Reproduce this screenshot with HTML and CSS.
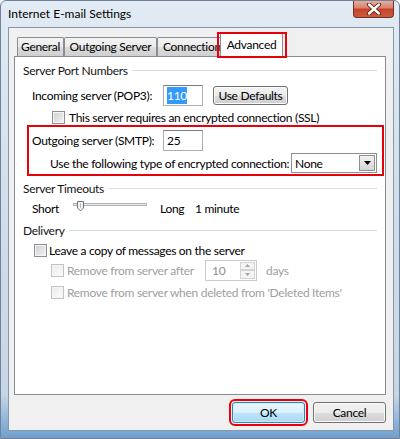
FILE: index.html
```html
<!DOCTYPE html>
<html lang="en">
<head>
    <meta charset="UTF-8">
    <title>Internet E-mail Settings</title>
    <link rel="stylesheet" href="styles.css">
</head>
<body>
    <div class="window">
        <div class="titlebar">
            <span class="title">Internet E-mail Settings</span>
            <div class="close-btn">
                <svg width="16" height="12" viewBox="0 0 16 12">
                    <path d="M3 1.5 L13 10.5 M13 1.5 L3 10.5" stroke="#5a1c12" stroke-width="4.2" stroke-linecap="round"/>
                    <path d="M3 1.5 L13 10.5 M13 1.5 L3 10.5" stroke="#ffffff" stroke-width="2.4" stroke-linecap="round"/>
                </svg>
            </div>
        </div>

        <div class="client">
            <div class="tabs">
                <div class="tab tab-general">General</div>
                <div class="tab tab-outgoing">Outgoing Server</div>
                <div class="tab tab-connection">Connection</div>
                <div class="tab tab-advanced active">Advanced</div>
            </div>

            <div class="panel">
                <!-- Server Port Numbers -->
                <div class="group-head"><span>Server Port Numbers</span><div class="rule"></div></div>
                <div class="group-body">
                    <div class="row row-incoming">
                        <span class="label">Incoming server (POP3):</span>
                        <div class="textbox"><span class="selected">110</span></div>
                        <button class="btn btn-small">Use Defaults</button>
                    </div>
                    <div class="row row-ssl">
                        <span class="checkbox"></span>
                        <span>This server requires an encrypted connection (SSL)</span>
                    </div>
                    <div class="highlight">
                        <div class="row row-outgoing">
                            <span class="label">Outgoing server (SMTP):</span>
                            <div class="textbox">25</div>
                        </div>
                        <div class="row row-encrypt">
                            <span>Use the following type of encrypted connection:</span>
                            <div class="dropdown">
                                <span>None</span>
                                <div class="drop-arrow">
                                    <svg width="7" height="4" viewBox="0 0 7 4"><path d="M0 0 H7 L3.5 4 Z" fill="#000"/></svg>
                                </div>
                            </div>
                        </div>
                    </div>
                </div>

                <!-- Server Timeouts -->
                <div class="group-head group-timeouts"><span>Server Timeouts</span><div class="rule"></div></div>
                <div class="group-body">
                    <div class="row row-timeout">
                        <span class="label-short">Short</span>
                        <svg class="slider" width="74" height="16" viewBox="0 0 74 16">
                            <rect x="0.5" y="3.5" width="73" height="2" fill="#e7eaea" stroke="#b0b4b8"/>
                            <path d="M4.5 1.5 H10.5 V8 L7.5 11 L4.5 8 Z" fill="#f3f3f3" stroke="#6f7377"/>
                            <line x1="7.5" y1="3" x2="7.5" y2="8" stroke="#b9bcbf"/>
                        </svg>
                        <span class="label-long">Long</span>
                        <span>1 minute</span>
                    </div>
                </div>

                <!-- Delivery -->
                <div class="group-head group-delivery"><span>Delivery</span><div class="rule"></div></div>
                <div class="group-body">
                    <div class="row row-leave">
                        <span class="checkbox"></span>
                        <span>Leave a copy of messages on the server</span>
                    </div>
                    <div class="row row-remove disabled">
                        <span class="checkbox"></span>
                        <span class="label-remove">Remove from server after</span>
                        <div class="spinner">
                            <span class="spin-value">10</span>
                            <div class="spin-buttons">
                                <div class="spin-btn"><svg width="5" height="3" viewBox="0 0 5 3"><path d="M0 3 L2.5 0 L5 3 Z" fill="#a7a7a7"/></svg></div>
                                <div class="spin-btn"><svg width="5" height="3" viewBox="0 0 5 3"><path d="M0 0 H5 L2.5 3 Z" fill="#a7a7a7"/></svg></div>
                            </div>
                        </div>
                        <span class="days">days</span>
                    </div>
                    <div class="row row-deleted disabled">
                        <span class="checkbox"></span>
                        <span>Remove from server when deleted from 'Deleted Items'</span>
                    </div>
                </div>
            </div>

            <div class="dialog-buttons">
                <button class="btn btn-default">OK</button>
                <button class="btn">Cancel</button>
            </div>
        </div>
    </div>
</body>
</html>
```

FILE: styles.css
```css
* {
    margin: 0;
    padding: 0;
    box-sizing: border-box;
}

body {
    font-family: Lato, "Liberation Sans", sans-serif;
    font-size: 12px;
    letter-spacing: -0.3px;
    color: #000;
    background: #fff;
}

/* Window frame */
.window {
    width: 400px;
    height: 439px;
    display: flex;
    flex-direction: column;
    border: 1px solid #6f8299;
    border-radius: 6px 6px 0 0;
    background: linear-gradient(180deg, #e2ebf3 0%, #d3e0ec 40%, #c6d6e6 90%, #6f9fcf 100%);
    overflow: hidden;
}

.titlebar {
    height: 26px;
    display: flex;
    align-items: flex-start;
    padding-left: 7px;
    flex-shrink: 0;
}

.title {
    margin-top: 5px;
    line-height: 16px;
    letter-spacing: 0;
}

.close-btn {
    margin-left: auto;
    margin-right: 5px;
    width: 41px;
    height: 18px;
    margin-top: -1px;
    border: 1px solid #6b3328;
    border-top: none;
    border-radius: 0 0 4px 4px;
    background: linear-gradient(180deg, #eab3a6 0%, #d9836f 45%, #c4442b 55%, #cf5a3e 100%);
    display: flex;
    align-items: center;
    justify-content: center;
}

.client {
    flex: 1;
    margin: 0 5px 7px 7px;
    border: 1px solid #8797a8;
    background: #f0f0f0;
    padding: 5px 7px 0 5px;
    display: flex;
    flex-direction: column;
}

/* Tabs */
.tabs {
    display: flex;
    align-items: flex-end;
    height: 23px;
    padding-left: 3px;
}

.tab {
    height: 19px;
    border: 1px solid #898c95;
    border-bottom: none;
    border-radius: 2px 2px 0 0;
    background: linear-gradient(180deg, #f3f3f3 0%, #ebebeb 50%, #dddddd 51%, #cfcfcf 100%);
    line-height: 17px;
    text-align: center;
    white-space: nowrap;
    overflow: hidden;
}

.tab-general { width: 47px; }
.tab-outgoing { width: 93px; }
.tab-connection { width: 65px; text-align: left; padding-left: 5px; }

.tab.active {
    position: relative;
    z-index: 1;
    width: 63px;
    height: 24px;
    margin-left: -2px;
    margin-bottom: -1px;
    background: #fff;
    line-height: 21px;
    overflow: visible;
}

.tab.active::after {
    content: "";
    position: absolute;
    top: -2px;
    left: -4px;
    right: -5px;
    bottom: -1px;
    border: 2px solid #e8000b;
}

.panel {
    width: 372px;
    height: 339px;
    border: 1px solid #898c95;
    background: #fff;
    padding: 5px 8px 0 8px;
}

/* Groups */
.group-head {
    display: flex;
    align-items: center;
    height: 16px;
    gap: 4px;
    color: #151515;
    white-space: nowrap;
}

.group-head .rule {
    flex: 1;
    height: 1px;
    background: #d5dfe5;
}

.group-timeouts { margin-top: 4px; }
.group-delivery { margin-top: 6px; }

.group-body {
    padding-left: 9px;
}

.row {
    display: flex;
    align-items: center;
    height: 16px;
    white-space: nowrap;
}

.label {
    width: 131px;
    flex-shrink: 0;
}

.textbox {
    width: 40px;
    height: 21px;
    flex-shrink: 0;
    border: 1px solid #abadb3;
    border-top-color: #7a7a7a;
    background: #fff;
    padding-left: 3px;
    line-height: 19px;
}

.selected {
    background: #3399ff;
    color: #fff;
    padding: 1px 0;
}

.row-incoming {
    margin-top: 6px;
    height: 22px;
}

.row-ssl {
    margin-top: 3px;
    padding-left: 20px;
    gap: 2px;
}

.highlight {
    margin-left: -5px;
    width: 357px;
    height: 51px;
    border: 2px solid #e8000b;
    padding-left: 3px;
}

.row-outgoing {
    margin-top: 2px;
    height: 22px;
}

.row-encrypt {
    margin-top: 1px;
    height: 22px;
    padding-left: 18px;
    padding-right: 5px;
}

.dropdown {
    margin-left: auto;
    width: 86px;
    height: 20px;
    flex-shrink: 0;
    border: 1px solid #8e8f8f;
    background: #fff;
    display: flex;
    align-items: center;
    padding: 0 1px 0 3px;
}

.drop-arrow {
    margin-left: auto;
    width: 16px;
    height: 16px;
    border: 1px solid #8e8f8f;
    background: linear-gradient(180deg, #f2f2f2 0%, #e4e4e4 50%, #d4d4d4 100%);
    display: flex;
    align-items: center;
    justify-content: center;
}

/* Checkboxes */
.checkbox {
    width: 13px;
    height: 13px;
    flex-shrink: 0;
    border: 1px solid #8f8f8f;
    background: linear-gradient(135deg, #cbcfd5 0%, #f4f4f4 100%);
    box-shadow: inset 0 0 0 1px #f4f4f4;
    margin-right: 2px;
}

.disabled {
    color: #a0a0a0;
}

.disabled .checkbox {
    border-color: #c4c4c4;
    background: linear-gradient(135deg, #ececec 0%, #fbfbfb 100%);
}

/* Timeouts row */
.row-timeout {
    margin-top: 4px;
}

.label-short {
    width: 41px;
}

.slider {
    flex-shrink: 0;
}

.label-long {
    width: 35px;
    margin-left: 13px;
}

/* Delivery rows */
.row-leave {
    margin-top: 4px;
    padding-left: 2px;
}

.row-remove {
    margin-top: 1px;
    height: 22px;
    padding-left: 19px;
}

.row-remove .checkbox,
.row-deleted .checkbox {
    margin-right: 3px;
}

.label-remove {
    width: 138px;
    flex-shrink: 0;
}

.spinner {
    width: 52px;
    height: 21px;
    flex-shrink: 0;
    border: 1px solid #c9cacb;
    display: flex;
    align-items: center;
    padding-left: 6px;
    padding-right: 1px;
}

.spin-value {
    flex: 1;
    color: #8d8d8d;
}

.spin-buttons {
    display: flex;
    flex-direction: column;
    width: 15px;
    height: 17px;
}

.spin-btn {
    flex: 1;
    border: 1px solid #d4d4d4;
    background: #f4f4f4;
    display: flex;
    align-items: center;
    justify-content: center;
}

.days {
    margin-left: 9px;
}

.row-deleted {
    margin-top: 3px;
    padding-left: 19px;
}

/* Buttons */
.btn {
    font-family: inherit;
    font-size: 12px;
    letter-spacing: inherit;
    color: #000;
    border: 1px solid #707070;
    border-radius: 3px;
    background: linear-gradient(180deg, #f2f2f2 0%, #ebebeb 50%, #dddddd 51%, #cfcfcf 100%);
    box-shadow: inset 0 0 0 1px #fbfbfb;
    cursor: pointer;
}

.btn-small {
    width: 75px;
    height: 19px;
    margin-left: 10px;
    flex-shrink: 0;
}

.dialog-buttons {
    display: flex;
    justify-content: flex-end;
    gap: 8px;
    margin-top: 7px;
}

.dialog-buttons .btn {
    width: 73px;
    height: 21px;
}

.btn-default {
    border-color: #3c7fb1;
    background: linear-gradient(180deg, #eaf6fd 0%, #d9f0fc 50%, #bee6fd 51%, #a7d9f5 100%);
    box-shadow: inset 0 0 0 1px #cdeefe;
    outline: 2px solid #e8000b;
    outline-offset: 1px;
}
```
